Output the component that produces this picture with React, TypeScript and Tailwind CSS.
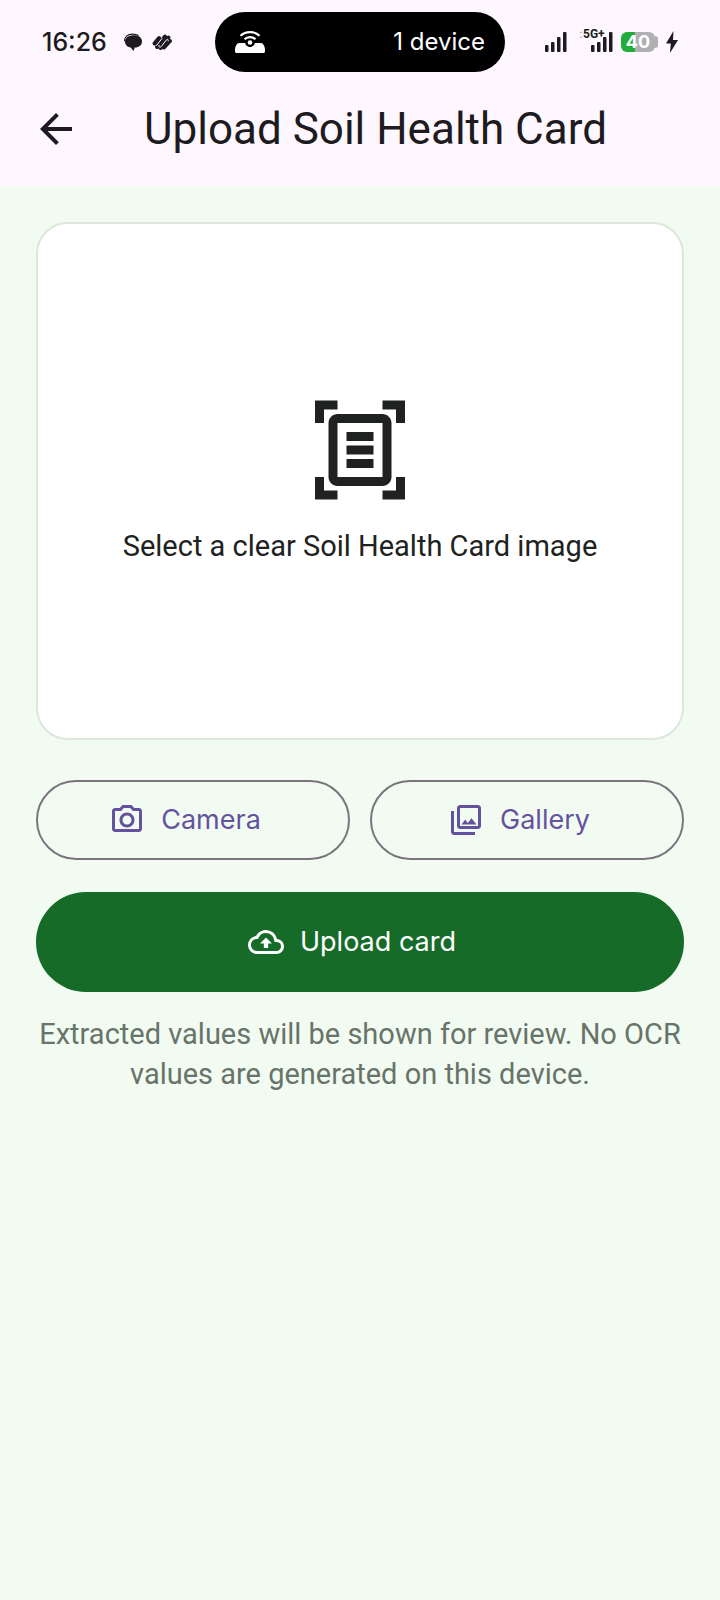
import {
  MdArrowBack,
  MdOutlineBackup,
  MdOutlineCameraAlt,
  MdOutlineDocumentScanner,
  MdOutlinePhotoLibrary,
} from "react-icons/md";

const ChatIcon = () => (
  <svg viewBox="0 0 20 20" className="h-5 w-5" aria-hidden="true">
    <path d="M2 9.500C2 5.500 6 3.300 11 3.300s8 2.600 8 6.200-2.900 5.800-7.200 6.100L10.500 19l-2.800-3.600C4 15 2 12.500 2 9.500z" fill="#1d1b20" />
    <path d="M1.500 9.200C1.300 5 4.500 2.200 9.500 2.100c2.500 0 4.500.5 6 1.500" fill="none" stroke="#1d1b20" strokeWidth="1.200" />
  </svg>
);

const KnotIcon = () => (
  <svg viewBox="0 0 22 20" className="h-5 w-[22px]" fill="none" strokeLinecap="round" aria-hidden="true">
    <path d="M3.500 11.500 8 6M6 15 14 4.500M9.500 16 17.500 5.500M13 15.500 19 9" stroke="#1d1b20" strokeWidth="4" />
    <path d="M5.500 13.500 11 6.500M8 13.500c-.6 2 1.300 2.300 2.300 1l5-6.500c1-1.300 2.500-.5 1.900 1" stroke="#fef7ff" strokeWidth="1" />
  </svg>
);

const HotspotIcon = () => (
  <svg viewBox="0 0 30 24" className="h-6 w-[30px]" fill="none" aria-hidden="true">
    <path d="M4 13h22c2 0 4 3.500 4 7v1.500c0 .8-.7 1.500-1.500 1.500h-27C.7 23 0 22.300 0 21.500V20c0-3.500 2-7 4-7z" fill="white" />
    <path d="M10 12h10c0 2.500-2 5-5 5s-5-2.500-5-5z" fill="black" />
    <circle cx="15" cy="12.500" r="2.300" fill="white" />
    <path d="M5.500 5.800c5.200-5 13.800-5 19 0M9.500 9.300c3-3 8-3 11 0" stroke="white" strokeWidth="2.200" />
  </svg>
);

const SignalIcon = () => (
  <svg viewBox="0 0 22 20" className="h-5 w-[22px]" fill="#1d1b20" aria-hidden="true">
    <rect x="0" y="13" width="3.500" height="7" rx="1" />
    <rect x="6" y="10" width="3.500" height="10" rx="1" />
    <rect x="12" y="5" width="3.500" height="15" rx="1" />
    <rect x="18" y="0" width="3.500" height="20" rx="1" />
  </svg>
);

// the network label sits over the upper left of the bars
const NetworkSignal = () => (
  <div className="relative">
    <SignalIcon />
    <span className="absolute -top-1 -left-2 font-[Roboto,sans-serif] text-xs leading-3 font-bold">5G+</span>
    <span className="absolute -top-1 -left-3 text-xs leading-3 text-gray-400">:</span>
  </div>
);

const BoltIcon = () => (
  <svg viewBox="0 0 12 22" className="h-[22px] w-3" aria-hidden="true">
    <path d="M7.500 0 0 12.500h4.800L4 22l8-13H7z" fill="#1d1b20" />
  </svg>
);

const StatusBar = () => (
  <div className="flex h-[84px] items-center px-[42px]">
    <div className="flex flex-1 items-center gap-2">
      <span className="mr-2 text-[25px] leading-8 font-medium">16:26</span>
      <ChatIcon />
      <KnotIcon />
    </div>
    <div className="flex h-[60px] w-[290px] items-center justify-between rounded-full bg-black px-5 text-white">
      <HotspotIcon />
      <span className="text-2xl">1 device</span>
    </div>
    <div className="flex flex-1 items-center justify-end gap-2">
      <div className="flex gap-6">
        <SignalIcon />
        <NetworkSignal />
      </div>
      <div className="flex items-center">
        <span className="h-5 w-[34px] rounded-md bg-linear-to-r from-[#22ac38] from-40% to-[#b0afb3] to-40% text-center text-lg leading-5 font-bold text-white">
          40
        </span>
        <span className="h-3 w-[3px] rounded-r-full bg-[#b0afb3]" />
      </div>
      <BoltIcon />
    </div>
  </div>
);

const App = () => {
  return (
    <div className="flex min-h-screen flex-col bg-[#f1fbf1] font-[Inter,sans-serif] text-[#1d1b20]">
      <header className="bg-[#fef7ff]">
        <StatusBar />
        <div className="flex h-[102px] items-start gap-16 px-8 pt-4">
          <button type="button" aria-label="Back" className="flex h-[58px] items-center">
            <MdArrowBack size={48} />
          </button>
          <h1 className="font-[Roboto,sans-serif] text-[44px] leading-[58px]">Upload Soil Health Card</h1>
        </div>
      </header>

      <main className="flex flex-col px-9 pt-9">
        <section className="flex flex-col items-center rounded-[32px] border-2 border-[#dbe8da] bg-white py-[172px] text-[#202221]">
          <MdOutlineDocumentScanner size={108} />
          <p className="mt-[22px] font-[Roboto,sans-serif] text-[29px] leading-10">Select a clear Soil Health Card image</p>
        </section>

        <div className="mt-10 flex gap-5 text-[27px] text-[#65529f]">
          <button type="button" className="flex h-20 flex-1 items-center justify-center gap-4 rounded-full border-2 border-[#79747e] pr-4">
            <MdOutlineCameraAlt size={36} />
            Camera
          </button>
          <button type="button" className="flex h-20 flex-1 items-center justify-center gap-4 rounded-full border-2 border-[#79747e] pr-4">
            <MdOutlinePhotoLibrary size={36} />
            Gallery
          </button>
        </div>

        <button type="button" className="mt-8 flex h-[100px] items-center justify-center gap-4 rounded-full bg-[#156b27] pr-4 text-[27px] text-white">
          <MdOutlineBackup size={36} />
          Upload card
        </button>

        <p className="mt-[22px] text-center font-[Roboto,sans-serif] text-[29px] leading-10 text-[#68736a]">
          Extracted values will be shown for review. No OCR values are generated on this device.
        </p>
      </main>
    </div>
  );
};

export default App;
